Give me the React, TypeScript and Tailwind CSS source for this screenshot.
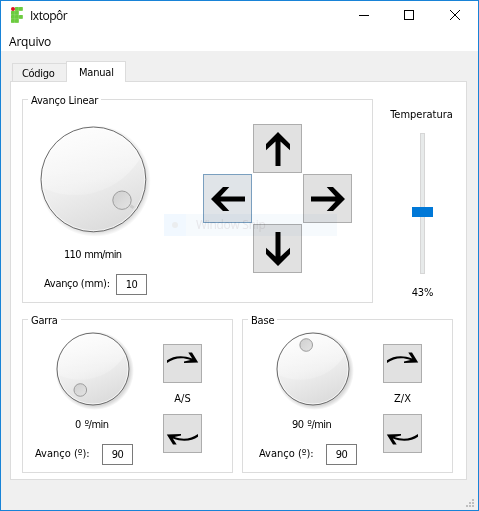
import React from "react";

const line = "border border-[#dcdcdc]";

function Group({ title, className, children }: { title: string; className: string; children: React.ReactNode }) {
  return (
    <section className={`${line} flex shrink-0 flex-col ${className}`}>
      <h2 className="-mt-[7px] ml-[5px] h-[14px] w-fit whitespace-nowrap bg-white pl-[3px] pr-[3px] leading-[15px] tracking-[-0.2px]">{title}</h2>
      {children}
    </section>
  );
}

function Dial({ id, r, kx, ky, kr, tick }: { id: string; r: number; kx: number; ky: number; kr: number; tick?: boolean }) {
  const s = r * 2 + 8;
  const c = r + 1;
  return (
    <svg width={s} height={s} viewBox={`0 0 ${s} ${s}`} className="block shrink-0">
      <defs>
        <linearGradient id={`${id}-body`} x1="0.3" y1="0" x2="0.7" y2="1">
          <stop offset="0" stopColor="#f6f6f6" />
          <stop offset="0.5" stopColor="#eeeeee" />
          <stop offset="1" stopColor="#dadada" />
        </linearGradient>
        <linearGradient id={`${id}-shine`} x1="0.5" y1="0.5" x2="0.6" y2="1">
          <stop offset="0" stopColor="#fff" stopOpacity="0.85" />
          <stop offset="1" stopColor="#fff" stopOpacity="0.15" />
        </linearGradient>
        <radialGradient id={`${id}-shadow`}>
          <stop offset="0.9" stopColor="#000" stopOpacity="0.15" />
          <stop offset="1" stopColor="#000" stopOpacity="0" />
        </radialGradient>
        <linearGradient id={`${id}-knob`} x1="0" y1="0" x2="1" y2="1">
          <stop offset="0" stopColor="#cfcfcf" />
          <stop offset="1" stopColor="#e4e4e4" />
        </linearGradient>
        <clipPath id={`${id}-clip`}><circle cx={c} cy={c} r={r - 0.8} /></clipPath>
      </defs>
      <circle cx={c + 1.6} cy={c + 1.6} r={r + 3.4} fill={`url(#${id}-shadow)`} />
      <circle cx={c} cy={c} r={r} fill={`url(#${id}-body)`} />
      <circle cx={c - r * 0.35} cy={c - r * 1.15} r={r * 1.45} fill={`url(#${id}-shine)`} clipPath={`url(#${id}-clip)`} />
      <circle cx={c} cy={c} r={r - 1} fill="none" stroke="#fff" strokeOpacity="0.7" />
      <circle cx={c} cy={c} r={r} fill="none" stroke="#5c5c5c" strokeWidth="0.9" />
      {tick && <path d={`M${kx + 8.5} ${ky + 5.5}l3 2.2`} stroke="#cbcbcb" strokeWidth="3" />}
      <circle cx={kx} cy={ky} r={kr} fill={`url(#${id}-knob)`} stroke="#9c9c9c" strokeWidth="1" />
    </svg>
  );
}

function Arrow({ turn, active }: { turn: string; active?: boolean }) {
  return (
    <button className={`flex h-[49px] w-[49px] items-start justify-start border ${active ? "border-[#7a9fbf] bg-[#e0e4e8]" : "border-[#adadad] bg-[#e1e1e1]"}`}>
      <svg width="48" height="48" viewBox="0 0 48 48" className={`shrink-0 ${turn}`}>
        <path d="M24 7 36 19v6.3L26.5 16.5V41h-5V16.5L12 25.3V19Z" fill="#000" />
      </svg>
    </button>
  );
}

function Curve({ back }: { back?: boolean }) {
  return (
    <button className="flex h-[39px] w-[39px] items-center justify-center border border-[#adadad] bg-[#e1e1e1]">
      <svg width="37" height="37" viewBox="0 0 37 37" className={back ? "rotate-180" : ""}>
        <path d="M3 15.3C9 11 18 9.6 28.2 13.4L24.3 7.6H28L34.2 17.4L20 18V16.6L26.5 15C18 11.9 10 13 3 18Z" fill="#000" />
      </svg>
    </button>
  );
}

function Field({ value }: { value: string }) {
  return <div className="h-[21px] w-[31px] shrink-0 border border-[#7a7a7a] bg-white text-center leading-[20px] tracking-[-0.5px]">{value}</div>;
}

function Axis({ id, title, speed, keys, kx, ky, label, pads }: { id: string; title: string; speed: string; keys: string; kx: number; ky: number; label: string; pads: [string, string] }) {
  return (
    <Group title={title} className="h-[154px] w-[211px]">
      <div className="flex pt-[5px]">
        <div className="flex w-[140px] flex-col">
          <div className="h-[86px] pl-[33px]">
            <Dial id={id} r={36} kx={kx} ky={ky} kr={6.3} />
          </div>
          <div className={`h-[14px] whitespace-nowrap leading-[14px] tracking-[-0.5px] [word-spacing:1px] ${pads[0]}`}>{speed}</div>
          <div className={`mt-[12px] flex h-[21px] items-center ${pads[1]}`}>
            <span className="w-[67px] whitespace-nowrap tracking-[0px]">{label}</span>
            <Field value="90" />
          </div>
        </div>
        <div className="flex flex-col pt-[12px]">
          <Curve />
          <div className="h-[31px] w-[39px] text-center leading-[32px] tracking-[0px]">{keys}</div>
          <Curve back />
        </div>
      </div>
    </Group>
  );
}

function Logo() {
  const rows = ["011", "110", "111", "110"];
  return (
    <svg width="12" height="16" viewBox="0 0 12 16" className="block">
      <path d="M4 .3h7.7v3.4H7.7v4.6h4v3.4h-4v4H.3V4H4Z" fill="#a5e083" />
      {rows.map((row, y) =>
        row.split("").map((d, x) =>
          d === "1" ? <rect key={`${x}-${y}`} x={x * 4} y={y * 4} width="3.7" height="3.7" rx="0.4" fill="#6ccb40" /> : null
        )
      )}
      <circle cx="2" cy="2" r="2" fill="#e01020" />
    </svg>
  );
}

export default function App() {
  return (
    <main className="relative flex h-[511px] w-[479px] flex-col overflow-hidden border border-[#1883d7] bg-[#f0f0f0] font-['DejaVu_Sans_Condensed','DejaVu_Sans',sans-serif] text-[11px] tracking-[-0.3px] text-black [font-stretch:condensed]">
      <header className="flex h-[30px] shrink-0 items-start bg-white pl-[10px]">
        <div className="pt-[6px]"><Logo /></div>
        <h1 className="ml-[7px] mt-[6px] font-['Open_Sans',sans-serif] text-[12px] leading-[18px] tracking-[-0.5px] [font-stretch:normal]">Ixtopôr</h1>
        <svg width="115" height="28" viewBox="0 0 115 28" className="ml-auto mr-[6px]" fill="none" stroke="#000" shapeRendering="crispEdges">
          <path d="M2 14.5h10M47.5 9.5h9v9h-9Z" />
          <path d="m93 9 10 10m0-10-10 10" shapeRendering="auto" />
        </svg>
      </header>
      <nav className="h-[20px] shrink-0 bg-white pl-[8px] font-['Open_Sans',sans-serif] text-[12px] leading-[21px] tracking-[-0.2px] [font-stretch:normal]">Arquivo</nav>

      <div className="flex flex-col pl-[9px] pt-[10px]">
        <div className="flex h-[20px] items-end pl-[2px]">
          <div className={`${line} h-[18px] w-[54px] border-b-0 border-r-0 bg-[#f0f0f0] pl-[9px] leading-[19px]`}>Código</div>
          <div className={`${line} relative -mb-px h-[21px] w-[60px] border-b-0 bg-white pl-[12px] leading-[21px] tracking-[-0.2px]`}>Manual</div>
        </div>

        <div className={`${line} h-[399px] w-[457px] bg-white pl-[11px] pt-[17px]`}>
          <div className="flex">
            <Group title="Avanço Linear" className="h-[204px] w-[351px]">
              <div className="flex">
                <div className="flex w-[180px] flex-col pt-[19px]">
                  <div className="h-[122px] pl-[17px]">
                    <Dial id="linear" r={52.4} kx={82} ky={74.2} kr={9.2} tick />
                  </div>
                  <div className="h-[14px] whitespace-nowrap pl-[41px] leading-[14px] tracking-[-0.7px] [word-spacing:1px]">110 mm/min</div>
                  <div className="mt-[12px] flex h-[21px] items-center pl-[21px]">
                    <span className="w-[72px] whitespace-nowrap">Avanço (mm):</span>
                    <Field value="10" />
                  </div>
                </div>
                <div className="mt-[17px] grid grid-cols-[49px_49px_49px] grid-rows-[49px_49px_49px] gap-px">
                  <div /><Arrow turn="" /><div />
                  <Arrow turn="-rotate-90" active /><div /><Arrow turn="rotate-90" />
                  <div /><Arrow turn="rotate-180" /><div />
                </div>
              </div>
            </Group>
            <aside className="flex w-[97px] shrink-0 flex-col items-center pt-[8px]">
              <div className="h-[14px] whitespace-nowrap leading-[15px] tracking-[0px]">Temperatura</div>
              <div className="ml-[2px] mt-[12px] flex h-[141px] w-[21px] flex-col items-center">
                <div className="h-[74px] w-[5px] border border-b-0 border-[#d6d6d6] bg-[#e7eaea]" />
                <div className="h-[10px] w-[21px] bg-[#0078d7]" />
                <div className="h-[57px] w-[5px] border border-t-0 border-[#d6d6d6] bg-[#e7eaea]" />
              </div>
              <div className="ml-[2px] mt-[11px] h-[14px] leading-[15px] tracking-[-0.1px]">43%</div>
            </aside>
          </div>
          <div className="mt-[16px] flex gap-[9px]">
            <Axis id="garra" title="Garra" speed="0 º/min" keys="A/S" kx={24.3} ky={58} label="Avanço (º):" pads={["pl-[52px]", "pl-[12px]"]} />
            <Axis id="base" title="Base" speed="90 º/min" keys="Z/X" kx={30.2} ky={13} label="Avanço (º):" pads={["pl-[49px]", "pl-[16px]"]} />
          </div>
        </div>
      </div>

      <div className="absolute left-[163px] top-[213px] flex h-[22px] w-[173px] items-center bg-[#f6fafd] mix-blend-multiply">
        <div className="flex h-[22px] w-[22px] items-center justify-center bg-[#f1f8ff]">
          <div className="h-[6px] w-[6px] rounded-full bg-[#ebedef]" />
        </div>
        <span className="ml-[10px] whitespace-nowrap font-['Open_Sans',sans-serif] text-[12px] tracking-[-0.3px] text-[#e6e6ea] [font-stretch:normal]">Window Snip</span>
      </div>
      <svg width="9" height="9" viewBox="0 0 9 9" className="absolute bottom-[2px] right-[3px]" fill="#bfbfbf">
        <path d="M6 0h2v2H6zM3 3h2v2H3zM6 3h2v2H6zM0 6h2v2H0zM3 6h2v2H3zM6 6h2v2H6z" />
      </svg>
    </main>
  );
}
